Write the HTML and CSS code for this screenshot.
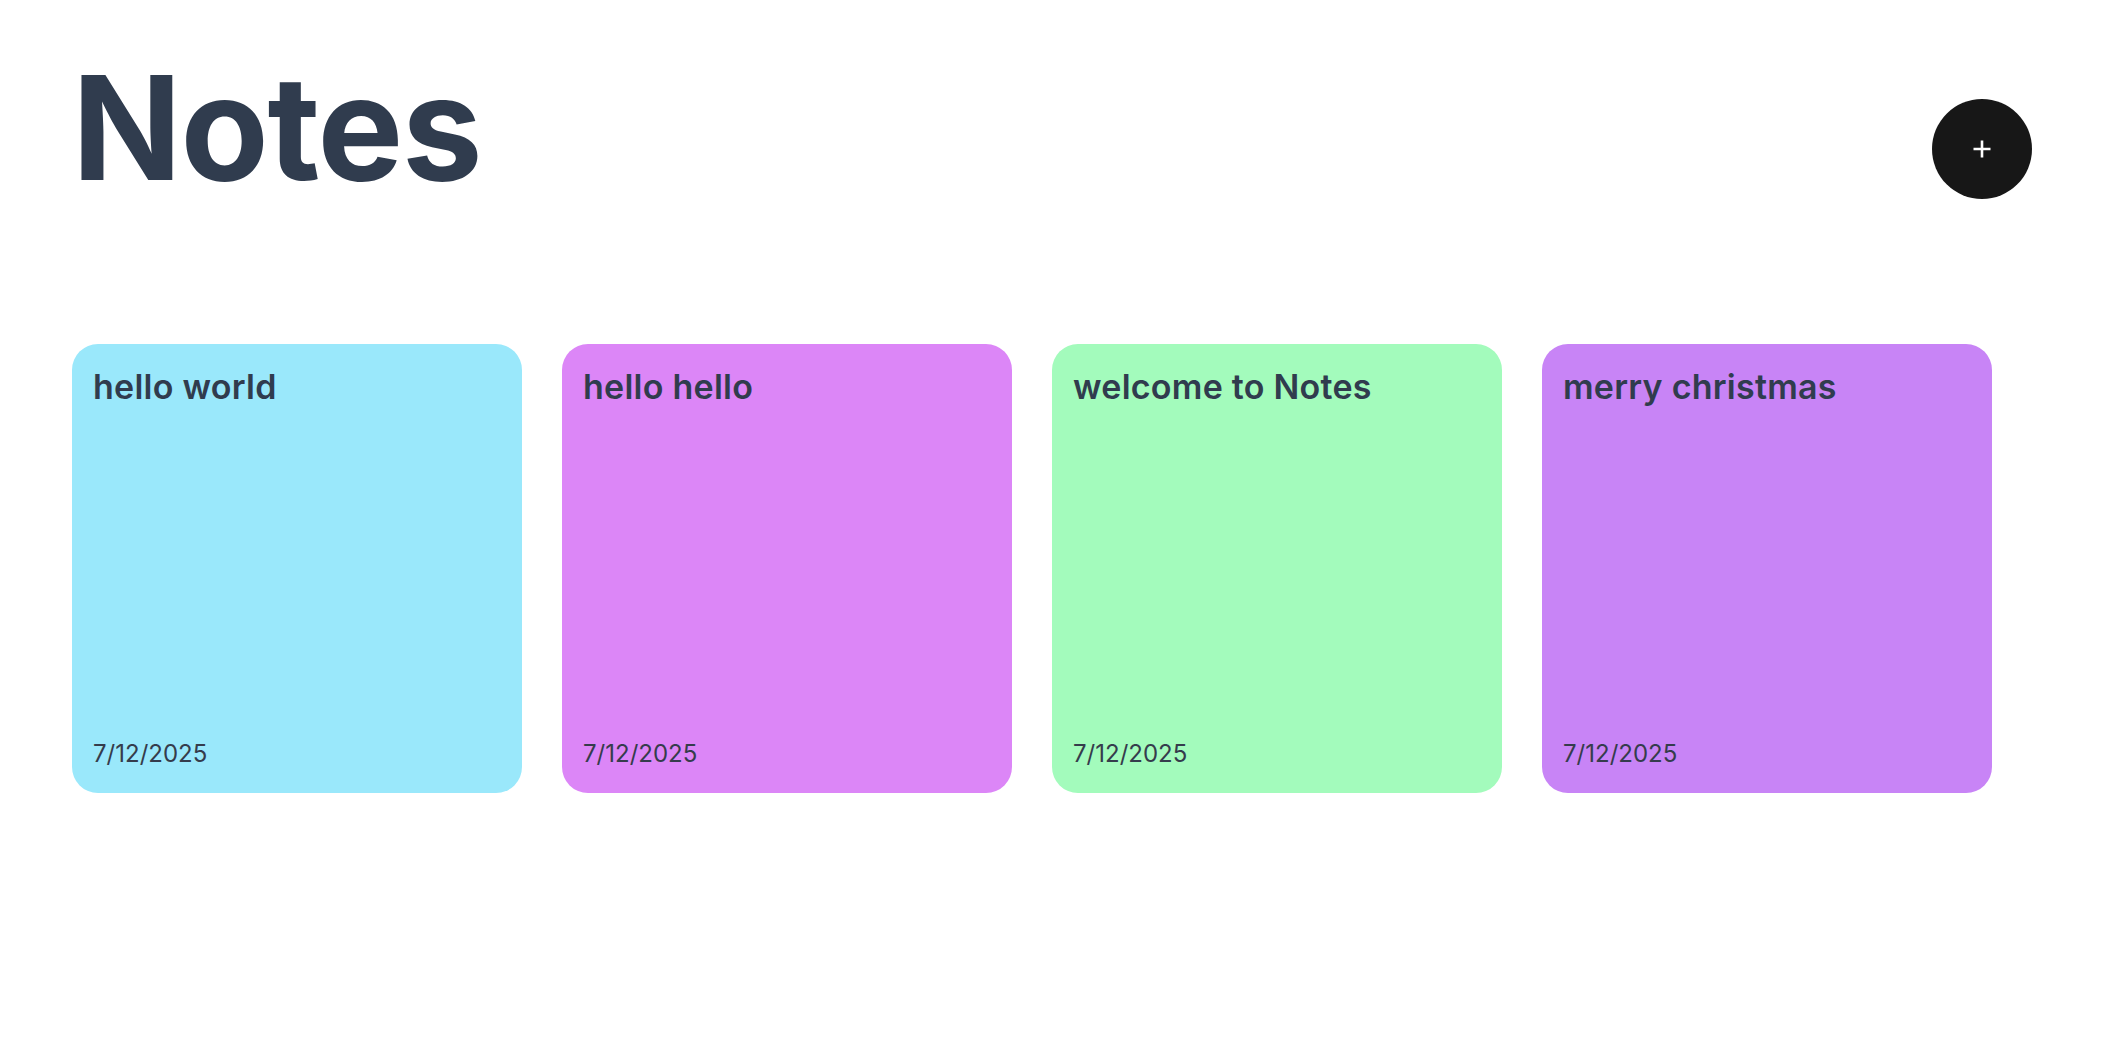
FILE: index.html
```html
<!DOCTYPE html>
<html lang="en">
<head>
<meta charset="utf-8">
<title>Notes</title>
<link rel="stylesheet" href="styles.css">
</head>
<body>
<div class="page">
  <header class="header">
    <h1 class="title">Notes</h1>
    <button class="add-btn" aria-label="Add note">
      <svg width="20" height="20" viewBox="0 0 20 20" aria-hidden="true">
        <path d="M10 1.5V18.5M1.5 10H18.5" stroke="#ffffff" stroke-width="2.6" stroke-linecap="butt"/>
      </svg>
    </button>
  </header>
  <main class="notes">
    <div class="note note-cyan">
      <div class="note-title">hello world</div>
      <div class="note-date">7/12/2025</div>
    </div>
    <div class="note note-pink">
      <div class="note-title">hello hello</div>
      <div class="note-date">7/12/2025</div>
    </div>
    <div class="note note-green">
      <div class="note-title">welcome to Notes</div>
      <div class="note-date">7/12/2025</div>
    </div>
    <div class="note note-violet">
      <div class="note-title">merry christmas</div>
      <div class="note-date">7/12/2025</div>
    </div>
  </main>
</div>
</body>
</html>
```

FILE: styles.css
```css
* { box-sizing: border-box; }

html, body {
  margin: 0;
  padding: 0;
  background: #ffffff;
}

body {
  font-family: Inter, "Noto Sans", "Liberation Sans", sans-serif;
  color: #334155;
}

.page {
  padding: 56px 84px 0 72px;
}

.header {
  display: flex;
  justify-content: space-between;
  align-items: flex-start;
  height: 144px;
}

.title {
  margin: 0;
  font-size: 144px;
  line-height: 1;
  font-weight: 700;
  letter-spacing: -1.3px;
  color: #303c4e;
}

.add-btn {
  margin-top: 43px;
  width: 100px;
  height: 100px;
  border-radius: 50%;
  border: none;
  background: #171717;
  display: flex;
  align-items: center;
  justify-content: center;
  padding: 0;
  cursor: pointer;
}

.notes {
  margin-top: 144px;
  display: flex;
  gap: 40px;
}

.note {
  width: 450px;
  height: 449px;
  border-radius: 26px;
  padding: 22px 21px 23px 21px;
  display: flex;
  flex-direction: column;
  justify-content: space-between;
}

.note-cyan { background: #9ae8fb; }
.note-pink { background: #dc86f7; }
.note-green { background: #a3fbbc; }
.note-violet { background: #c884f6; }

.note-title {
  font-size: 34px;
  line-height: 42px;
  font-weight: 600;
  letter-spacing: 0.25px;
  color: #303c4e;
}

.note-date {
  font-size: 24px;
  line-height: 32px;
  font-weight: 400;
  color: #353c4c;
}
```
